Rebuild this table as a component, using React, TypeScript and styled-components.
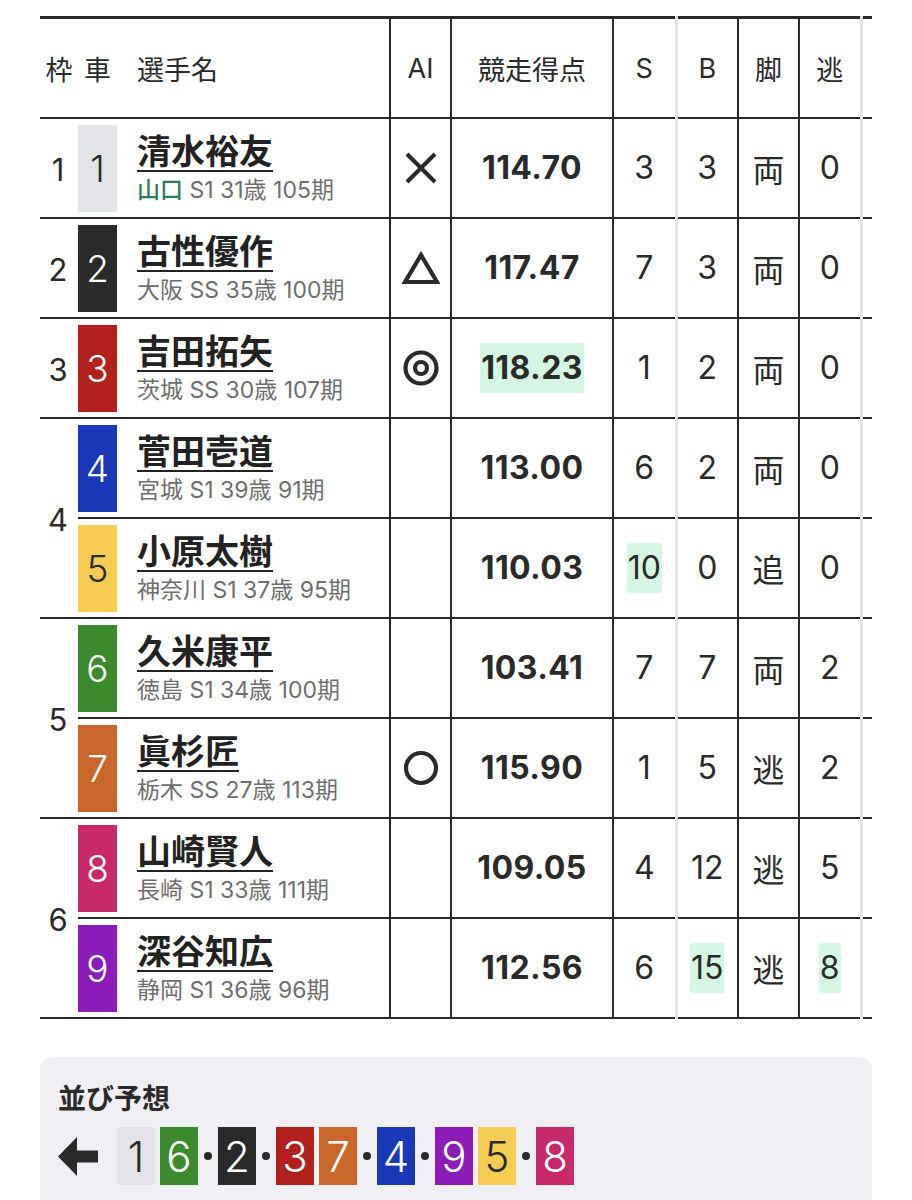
import React from 'react';
import styled, { createGlobalStyle } from 'styled-components';

const GlobalStyle = createGlobalStyle`
  body {
    margin: 0;
    background: #ffffff;
    font-family: Inter, "Noto Sans CJK JP", sans-serif;
    color: #2a2a2a;
  }
`;

type Mark = 'cross' | 'tri' | 'double' | 'circle';

type Rider = {
  car: number;
  frame?: number;
  span?: number;
  name: string;
  pref: string;
  home?: boolean;
  info: string;
  ai?: Mark;
  score: string;
  scoreHi?: boolean;
  s: number;
  sHi?: boolean;
  b: number;
  bHi?: boolean;
  leg: string;
  nige: number;
  nigeHi?: boolean;
};

const carColors: Record<number, [string, string]> = {
  1: ['#e3e4e8', '#2a2a2a'],
  2: ['#2a2a2a', '#ffffff'],
  3: ['#b3211f', '#ffffff'],
  4: ['#1838b8', '#ffffff'],
  5: ['#f6cd52', '#2a2a2a'],
  6: ['#3b8a2d', '#ffffff'],
  7: ['#c9672a', '#ffffff'],
  8: ['#c8296b', '#ffffff'],
  9: ['#8b1cba', '#ffffff'],
};

const riders: Rider[] = [
  { car: 1, frame: 1, span: 1, name: '清水裕友', pref: '山口', home: true, info: 'S1 31歳 105期', ai: 'cross', score: '114.70', s: 3, b: 3, leg: '両', nige: 0 },
  { car: 2, frame: 2, span: 1, name: '古性優作', pref: '大阪', info: 'SS 35歳 100期', ai: 'tri', score: '117.47', s: 7, b: 3, leg: '両', nige: 0 },
  { car: 3, frame: 3, span: 1, name: '吉田拓矢', pref: '茨城', info: 'SS 30歳 107期', ai: 'double', score: '118.23', scoreHi: true, s: 1, b: 2, leg: '両', nige: 0 },
  { car: 4, frame: 4, span: 2, name: '菅田壱道', pref: '宮城', info: 'S1 39歳 91期', score: '113.00', s: 6, b: 2, leg: '両', nige: 0 },
  { car: 5, name: '小原太樹', pref: '神奈川', info: 'S1 37歳 95期', score: '110.03', s: 10, sHi: true, b: 0, leg: '追', nige: 0 },
  { car: 6, frame: 5, span: 2, name: '久米康平', pref: '徳島', info: 'S1 34歳 100期', score: '103.41', s: 7, b: 7, leg: '両', nige: 2 },
  { car: 7, name: '眞杉匠', pref: '栃木', info: 'SS 27歳 113期', ai: 'circle', score: '115.90', s: 1, b: 5, leg: '逃', nige: 2 },
  { car: 8, frame: 6, span: 2, name: '山崎賢人', pref: '長崎', info: 'S1 33歳 111期', score: '109.05', s: 4, b: 12, leg: '逃', nige: 5 },
  { car: 9, name: '深谷知広', pref: '静岡', info: 'S1 36歳 96期', score: '112.56', s: 6, b: 15, bHi: true, leg: '逃', nige: 8, nigeHi: true },
];

// 並び予想: groups separated by a dot
const lineup: number[][] = [[1, 6], [2], [3, 7], [4], [9, 5], [8]];

const DARK = '#2a2a2a';
const LIGHT = '#e1e1e7';

const Page = styled.div`
  padding: 16px 40px 0 40px;
`;

const Table = styled.table`
  width: 832px;
  border-collapse: collapse;
  table-layout: fixed;
  border-top: 3px solid ${DARK};
`;

type Edge = 'dark' | 'light' | 'none';

const edge = (e?: Edge) =>
  e === 'dark' ? `2px solid ${DARK}` : e === 'light' ? `3px solid ${LIGHT}` : 'none';

const HeadCell = styled.th<{ $right?: Edge; $left?: boolean }>`
  height: 98px;
  padding: 0;
  padding-left: ${p => (p.$left ? '20px' : '0')};
  font-size: 27px;
  font-weight: 400;
  text-align: ${p => (p.$left ? 'left' : 'center')};
  border-bottom: 2px solid ${DARK};
  border-right: ${p => edge(p.$right)};
  color: ${DARK};
`;

const Row = styled.tr`
  height: 100px;
`;

const Cell = styled.td<{ $right?: Edge }>`
  padding: 0;
  text-align: center;
  vertical-align: middle;
  font-size: 32px;
  border-bottom: 2px solid ${DARK};
  border-right: ${p => edge(p.$right)};
  color: ${DARK};
`;

const FrameCell = styled(Cell)`
  font-size: 31px;
  padding-top: 2px;
  padding-right: 2px;
`;

const CarCell = styled(Cell)`
  padding: 5px 0 5px 0;
`;

const CarBadge = styled.div<{ $bg: string; $fg: string }>`
  height: 87px;
  display: flex;
  align-items: center;
  justify-content: center;
  background: ${p => p.$bg};
  color: ${p => p.$fg};
  font-size: 37px;
  font-weight: 300;
`;

const NameCell = styled(Cell)`
  text-align: left;
  padding-left: 20px;
`;

const Name = styled.div`
  font-size: 34px;
  font-weight: 700;
  line-height: 42px;
  text-decoration: underline;
  text-decoration-thickness: 2px;
  text-underline-offset: 6px;
  color: #222222;
`;

const Sub = styled.div`
  font-size: 23px;
  line-height: 30px;
  margin-top: 2px;
  color: #6e6e6e;
  white-space: nowrap;
`;

const Pref = styled.span<{ $home?: boolean }>`
  color: ${p => (p.$home ? '#2e7b58' : '#6e6e6e')};
  font-weight: ${p => (p.$home ? 500 : 400)};
`;

const ScoreCell = styled(Cell)`
  font-weight: 700;
  letter-spacing: 0.4px;
`;

const Hi = styled.span<{ $on?: boolean }>`
  display: inline-block;
  line-height: 50px;
  padding: 0 1px;
  background: ${p => (p.$on ? '#d6f6e4' : 'transparent')};
`;

const IconBox = styled.div`
  display: flex;
  align-items: center;
  justify-content: center;
`;

const Yoso = styled.div`
  margin-top: 38px;
  width: 832px;
  box-sizing: border-box;
  background: #efeff4;
  border-radius: 12px;
  padding: 24px 18px 30px 18px;
`;

const YosoTitle = styled.div`
  font-size: 28px;
  font-weight: 700;
  line-height: 36px;
  color: ${DARK};
`;

const Lineup = styled.div`
  display: flex;
  align-items: center;
  margin-top: 10px;
`;

const ArrowBox = styled.div`
  width: 40px;
  height: 39px;
  margin-right: 19px;
  display: flex;
`;

const Group = styled.div`
  display: flex;
  gap: 5px;
`;

const Dot = styled.span`
  width: 8px;
  height: 8px;
  border-radius: 50%;
  background: ${DARK};
  margin: 0 6px;
`;

const LineBadge = styled.div<{ $bg: string; $fg: string }>`
  width: 38px;
  height: 58px;
  display: flex;
  align-items: center;
  justify-content: center;
  background: ${p => p.$bg};
  color: ${p => p.$fg};
  font-size: 42px;
  font-weight: 300;
`;

const MarkIcon: React.FC<{ mark: Mark }> = ({ mark }) => {
  const common = { fill: 'none', stroke: DARK, strokeWidth: 4.2 };
  if (mark === 'cross') {
    return (
      <svg width="34" height="34" viewBox="0 0 34 34">
        <path d="M3 3 L31 31 M31 3 L3 31" {...common} />
      </svg>
    );
  }
  if (mark === 'tri') {
    return (
      <svg width="38" height="34" viewBox="0 0 38 34">
        <path d="M19 4 L35 31 L3 31 Z" {...common} strokeLinejoin="miter" />
      </svg>
    );
  }
  if (mark === 'double') {
    return (
      <svg width="38" height="38" viewBox="0 0 38 38">
        <circle cx="19" cy="19" r="15.5" {...common} />
        <circle cx="19" cy="19" r="6" {...common} />
      </svg>
    );
  }
  return (
    <svg width="36" height="36" viewBox="0 0 36 36">
      <circle cx="18" cy="18" r="15" {...common} />
    </svg>
  );
};

const Arrow: React.FC = () => (
  <svg width="40" height="39" viewBox="0 0 40 39">
    <path d="M0 19.5 L19 0 L19 13.5 L40 13.5 L40 25.5 L19 25.5 L19 39 Z" fill={DARK} />
  </svg>
);

export default function App() {
  return (
    <Page>
      <GlobalStyle />
      <Table>
        <colgroup>
          <col style={{ width: 38 }} />
          <col style={{ width: 39 }} />
          <col style={{ width: 273 }} />
          <col style={{ width: 61 }} />
          <col style={{ width: 162 }} />
          <col style={{ width: 63 }} />
          <col style={{ width: 62 }} />
          <col style={{ width: 61 }} />
          <col style={{ width: 62 }} />
          <col style={{ width: 11 }} />
        </colgroup>
        <thead>
          <tr>
            <HeadCell>枠</HeadCell>
            <HeadCell>車</HeadCell>
            <HeadCell $left $right="dark">選手名</HeadCell>
            <HeadCell $right="dark">AI</HeadCell>
            <HeadCell $right="dark">競走得点</HeadCell>
            <HeadCell $right="light">S</HeadCell>
            <HeadCell $right="dark">B</HeadCell>
            <HeadCell $right="dark">脚</HeadCell>
            <HeadCell $right="light">逃</HeadCell>
            <HeadCell />
          </tr>
        </thead>
        <tbody>
          {riders.map(r => {
            const [bg, fg] = carColors[r.car];
            return (
              <Row key={r.car}>
                {r.frame !== undefined && <FrameCell rowSpan={r.span}>{r.frame}</FrameCell>}
                <CarCell>
                  <CarBadge $bg={bg} $fg={fg}>{r.car}</CarBadge>
                </CarCell>
                <NameCell $right="dark">
                  <Name>{r.name}</Name>
                  <Sub>
                    <Pref $home={r.home}>{r.pref}</Pref> {r.info}
                  </Sub>
                </NameCell>
                <Cell $right="dark">
                  <IconBox>{r.ai && <MarkIcon mark={r.ai} />}</IconBox>
                </Cell>
                <ScoreCell $right="dark">
                  <Hi $on={r.scoreHi}>{r.score}</Hi>
                </ScoreCell>
                <Cell $right="light">
                  <Hi $on={r.sHi}>{r.s}</Hi>
                </Cell>
                <Cell $right="dark">
                  <Hi $on={r.bHi}>{r.b}</Hi>
                </Cell>
                <Cell $right="dark">{r.leg}</Cell>
                <Cell $right="light">
                  <Hi $on={r.nigeHi}>{r.nige}</Hi>
                </Cell>
                <Cell />
              </Row>
            );
          })}
        </tbody>
      </Table>
      <Yoso>
        <YosoTitle>並び予想</YosoTitle>
        <Lineup>
          <ArrowBox>
            <Arrow />
          </ArrowBox>
          {lineup.map((g, i) => (
            <React.Fragment key={i}>
              {i > 0 && <Dot />}
              <Group>
                {g.map(n => {
                  const [bg, fg] = carColors[n];
                  return (
                    <LineBadge key={n} $bg={bg} $fg={fg}>
                      {n}
                    </LineBadge>
                  );
                })}
              </Group>
            </React.Fragment>
          ))}
        </Lineup>
      </Yoso>
    </Page>
  );
}
